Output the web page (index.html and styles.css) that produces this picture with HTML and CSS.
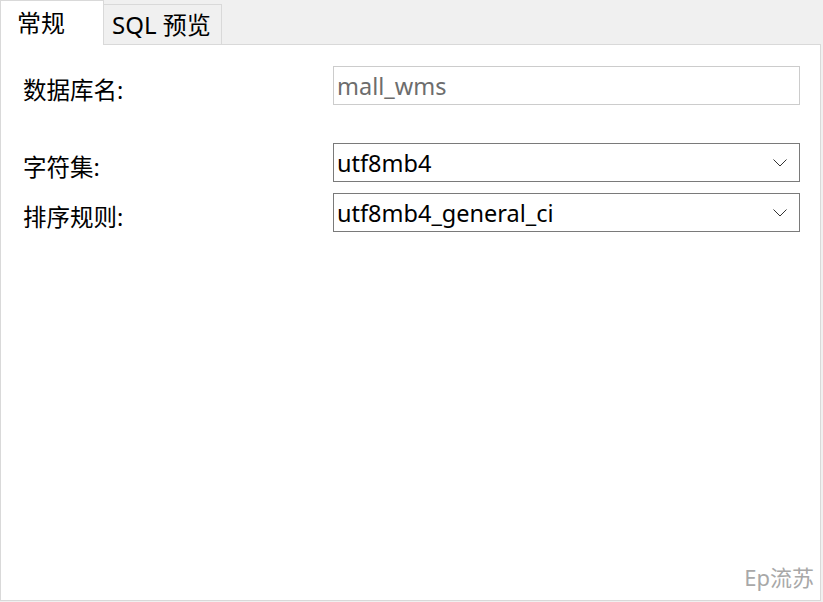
FILE: index.html
```html
<!DOCTYPE html>
<html>
<head>
<meta charset="utf-8">
<link rel="stylesheet" href="styles.css">
</head>
<body>
<div class="window">
  <div class="tabs">
    <div class="tab active">常规</div>
    <div class="tab">SQL 预览</div>
  </div>
  <div class="panel">
    <div class="row first">
      <div class="label">数据库名:</div>
      <div class="field disabled">mall_wms</div>
    </div>
    <div class="row gap">
      <div class="label">字符集:</div>
      <div class="field select">utf8mb4<svg class="chev" width="14" height="8" viewBox="0 0 14 8"><path d="M0.5 0.5 L7 7 L13.5 0.5" fill="none" stroke="#333" stroke-width="1"/></svg></div>
    </div>
    <div class="row">
      <div class="label">排序规则:</div>
      <div class="field select">utf8mb4_general_ci<svg class="chev" width="14" height="8" viewBox="0 0 14 8"><path d="M0.5 0.5 L7 7 L13.5 0.5" fill="none" stroke="#333" stroke-width="1"/></svg></div>
    </div>
    <div class="watermark">Ep流苏</div>
  </div>
</div>
</body>
</html>
```
FILE: styles.css
```css
html, body {
  margin: 0;
  padding: 0;
  background: #ffffff;
}
body {
  width: 823px;
  height: 602px;
  overflow: hidden;
  font-family: "Noto Sans", "Noto Sans CJK SC", sans-serif;
  font-size: 24px;
  color: #000;
}
.window {
  width: 823px;
  height: 602px;
  background: #f0f0f0;
  display: flex;
  flex-direction: column;
}
.tabs {
  display: flex;
  align-items: flex-end;
  height: 44px;
  position: relative;
  z-index: 1;
}
.tab {
  box-sizing: border-box;
  height: 40px;
  border: 1px solid #d9d9d9;
  border-bottom: none;
  background: #f0f0f0;
  padding: 0 8px;
  line-height: 40px;
  width: 119px;
  margin-left: -1px;
}
.tab.active {
  height: 45px;
  margin-bottom: -1px;
  background: #fff;
  width: 104px;
  margin-left: 0;
  padding-left: 16px;
  line-height: 44px;
  position: relative;
}
.tab + .tab {
  padding-left: 8px;
}
.panel {
  box-sizing: border-box;
  width: 821px;
  height: 557px;
  background: #fff;
  border: 1px solid #d9d9d9;
  position: relative;
  padding: 21px 20px 0 22px;
}
.row {
  display: flex;
  align-items: flex-start;
  margin-bottom: 11px;
}
.row.gap {
  margin-top: 38px;
}
.label {
  width: 310px;
  height: 39px;
  line-height: 49px;
  font-size: 23.5px;
}
.field {
  box-sizing: border-box;
  width: 467px;
  height: 39px;
  border: 1px solid #7a7a7a;
  padding: 0 3px;
  line-height: 36px;
  display: flex;
  align-items: center;
  justify-content: space-between;
  font-size: 23.5px;
}
.field.disabled {
  border-color: #cccccc;
  color: #6d6d6d;
}
.chev {
  margin-right: 9px;
}
.watermark {
  position: absolute;
  right: 6px;
  bottom: 8px;
  color: #a8a8a8;
  font-size: 22px;
}
```
